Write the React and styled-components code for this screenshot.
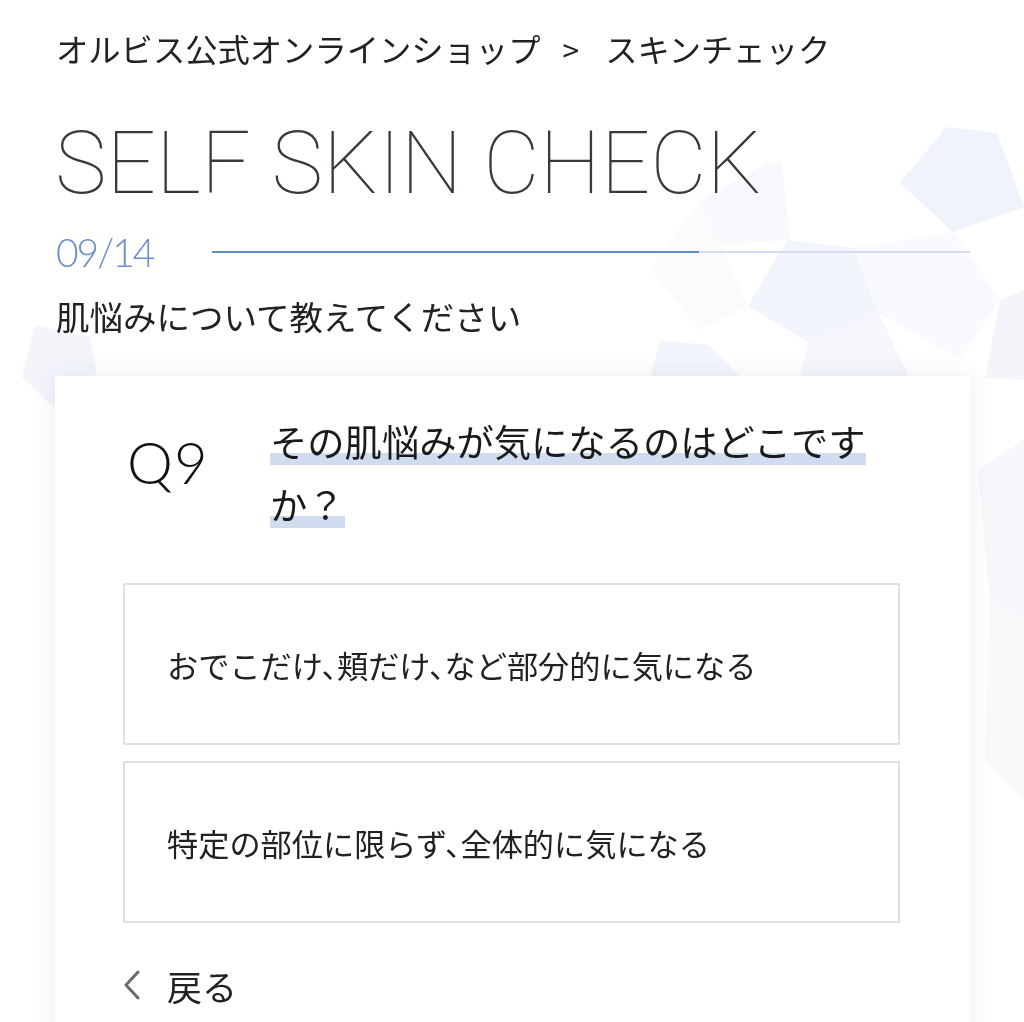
import React from 'react'
import styled, { createGlobalStyle } from 'styled-components'

const GlobalStyle = createGlobalStyle`
  html, body {
    margin: 0;
    padding: 0;
    background: #ffffff;
  }
  body {
    font-family: "Noto Sans CJK JP", "Noto Sans", sans-serif;
    color: #222;
    overflow: hidden;
  }
`

const jp = `"Noto Sans CJK JP", "Noto Sans", sans-serif`
const latin = `Lato, "Open Sans", sans-serif`
const display = `Roboto, Lato, sans-serif`

const Backdrop = styled.svg`
  position: fixed;
  top: 0;
  left: 0;
  width: 1024px;
  height: 1022px;
  z-index: 0;
  pointer-events: none;
`

const Page = styled.div`
  position: relative;
  z-index: 1;
  padding: 28px 54px 0 55px;
  min-height: 1022px;
  box-sizing: border-box;
`

const Breadcrumb = styled.nav`
  font-family: ${jp};
  font-size: 32.3px;
  line-height: 40px;
  color: #222;
  padding-left: 1px;
  white-space: nowrap;
`

const Crumb = styled.span`
  color: inherit;
`

const Sep = styled.span`
  margin: 0 26px 0 22px;
  font-size: 30px;
`

const Title = styled.h1`
  margin: 51px 0 0 0;
  font-family: ${display};
  font-weight: 100;
  font-size: 87px;
  line-height: 86px;
  color: #3d3838;
  letter-spacing: 0;
  white-space: nowrap;
`

const ProgressRow = styled.div`
  margin-top: 26px;
  display: flex;
  align-items: center;
  height: 40px;
  padding-left: 1px;
`

const Step = styled.span`
  font-family: ${latin};
  font-weight: 300;
  font-size: 39px;
  line-height: 40px;
  color: #6b8fcc;
  width: 156px;
  letter-spacing: -2px;
`

const Track = styled.div`
  flex: 1;
  height: 2px;
  background: #d3ddef;
  display: flex;
`

const Fill = styled.div`
  height: 100%;
  background: #658ac4;
`

const Lead = styled.p`
  margin: 22px 0 0 1px;
  font-family: ${jp};
  font-size: 33.5px;
  line-height: 44px;
  color: #222;
`

const Card = styled.section`
  margin-top: 38px;
  background: #fff;
  box-shadow: 0 0 22px rgba(40, 50, 80, 0.09);
  padding: 34px 70px 60px 68px;
  min-height: 700px;
`

const QuestionRow = styled.div`
  display: flex;
  align-items: flex-start;
  padding-left: 4px;
`

const QNumber = styled.div`
  font-family: ${latin};
  font-weight: 300;
  font-size: 58px;
  line-height: 64px;
  margin-top: 20px;
  width: 143px;
  flex-shrink: 0;
  color: #111;
  letter-spacing: 1px;
`

const QText = styled.h2`
  margin: 0;
  max-width: 616px;
  font-family: ${jp};
  font-weight: 400;
  font-size: 37.3px;
  line-height: 63px;
  color: #1a1a1a;
`

const Mark = styled.span`
  background: linear-gradient(
    transparent 72%,
    #d0dcef 72%,
    #d0dcef 95%,
    transparent 95%
  );
`

const Options = styled.div`
  margin-top: 47px;
  display: flex;
  flex-direction: column;
  gap: 16px;
`

const Option = styled.button`
  box-sizing: border-box;
  height: 162px;
  width: 100%;
  border: 2px solid #e0e0e0;
  background: #fff;
  display: flex;
  align-items: center;
  padding: 0 0 0 42px;
  font-family: ${jp};
  font-size: 31.2px;
  font-feature-settings: "halt";
  color: #222;
  text-align: left;
  cursor: pointer;
`

const Back = styled.a`
  margin-top: 42px;
  display: flex;
  align-items: center;
  gap: 26px;
  height: 40px;
  font-family: ${jp};
  font-size: 35px;
  color: #222;
  text-decoration: none;
`

const Chevron = () => (
  <svg width="18" height="30" viewBox="0 0 18 30">
    <polyline
      points="15,2 3,15 15,28"
      fill="none"
      stroke="#6a6a6a"
      strokeWidth="3"
      strokeLinecap="round"
      strokeLinejoin="round"
    />
  </svg>
)

const shapes = [
  { p: '947,127 997,133 1024,207 953,232 900,183', c: '#eff3fb' },
  { p: '767,163 782,163 790,240 703,246 700,200', c: '#f8f9fd' },
  { p: '787,240 853,248 878,312 808,342 748,306', c: '#f2f5fc' },
  { p: '853,248 953,232 1000,300 960,360 878,312', c: '#f9fafd' },
  { p: '660,340 708,345 742,378 650,378', c: '#f2f5fb' },
  { p: '808,342 878,312 910,378 800,378', c: '#f5f7fc' },
  { p: '1000,300 1024,290 1024,380 985,378', c: '#f3f5fa' },
  { p: '700,200 748,306 700,330 650,270', c: '#fafbfd' },
  { p: '35,325 90,337 97,373 53,407 22,377', c: '#f3f5fb' },
  { p: '978,470 1024,440 1024,620 990,600', c: '#f6f7fa' },
  { p: '990,600 1024,620 1024,800 985,760', c: '#f9f9fb' },
]

const steps = { current: 9, total: 14 }

export default function App() {
  const pct = (steps.current / steps.total) * 100
  return (
    <>
      <GlobalStyle />
      <Backdrop viewBox="0 0 1024 1022">
        {shapes.map((s, i) => (
          <polygon key={i} points={s.p} fill={s.c} />
        ))}
      </Backdrop>
      <Page>
        <Breadcrumb>
          <Crumb>オルビス公式オンラインショップ</Crumb>
          <Sep>&gt;</Sep>
          <Crumb>スキンチェック</Crumb>
        </Breadcrumb>
        <Title>SELF SKIN CHECK</Title>
        <ProgressRow>
          <Step>09/14</Step>
          <Track>
            <Fill style={{ width: `${pct}%` }} />
          </Track>
        </ProgressRow>
        <Lead>肌悩みについて教えてください</Lead>
        <Card>
          <QuestionRow>
            <QNumber>Q9</QNumber>
            <QText>
              <Mark>その肌悩みが気になるのはどこですか？</Mark>
            </QText>
          </QuestionRow>
          <Options>
            <Option>おでこだけ、頬だけ、など部分的に気になる</Option>
            <Option>特定の部位に限らず、全体的に気になる</Option>
          </Options>
          <Back href="#">
            <Chevron />
            戻る
          </Back>
        </Card>
      </Page>
    </>
  )
}
